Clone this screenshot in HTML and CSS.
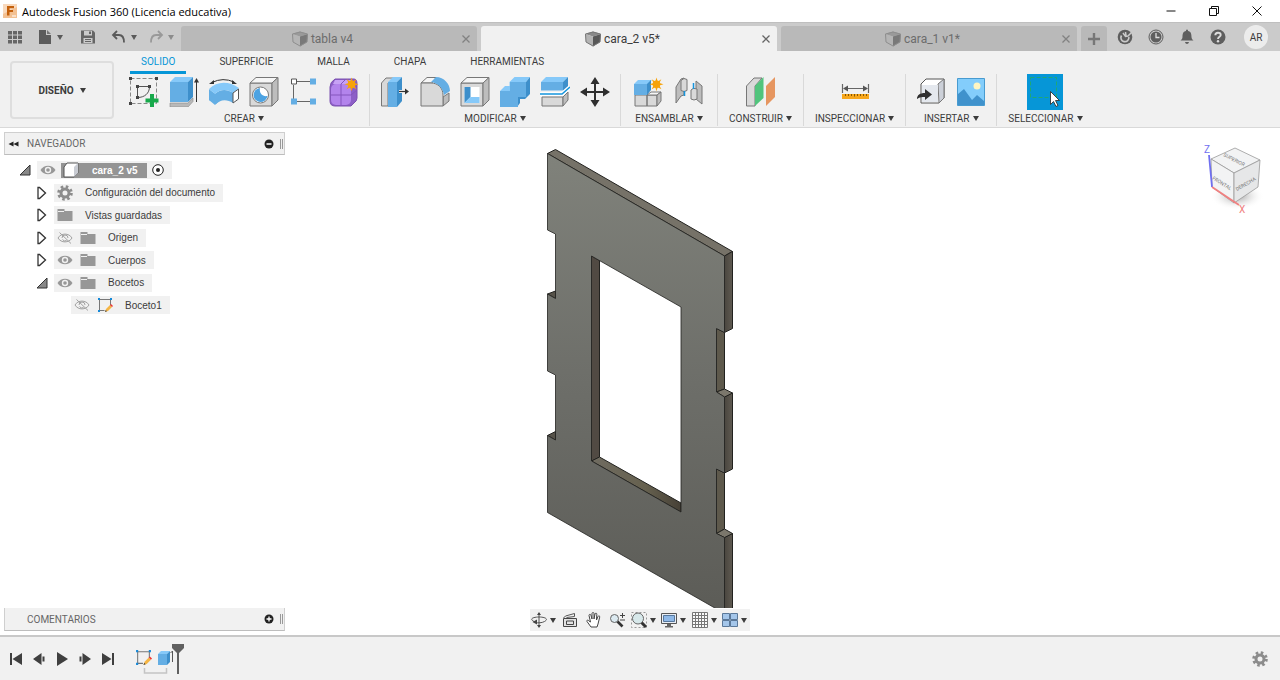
FILE: index.html
```html
<!DOCTYPE html>
<html lang="es">
<head>
  <meta charset="UTF-8">
  <title>Autodesk Fusion 360 (Licencia educativa)</title>
  <link rel="stylesheet" href="styles.css">
</head>
<body>
  <!-- shared icons -->
  <svg class="defs" aria-hidden="true">
    <symbol id="i-cube" viewBox="0 0 16 16">
      <path d="M0 3 8 0.500 16 3 8 5.500z" fill="#8a8a8a"/>
      <path d="M0 3 8 5.500V15.500L1 11z" fill="#b4b4b4"/>
      <path d="M16 3 8 5.500V15.500L15 11z" fill="#585858"/>
      <path d="M0.500 3 8 1 15.500 3 15 11 8 15 1 11z" fill="none" stroke="#777"/>
    </symbol>
    <symbol id="i-close" viewBox="0 0 10 10"><path d="M1.500 1.500l7 7M8.500 1.500l-7 7" stroke="#666" stroke-width="1.300"/></symbol>
    <symbol id="i-eye" viewBox="0 0 16 16">
      <path d="M0.500 8C4 2.200 12 2.200 15.500 8 12 13.800 4 13.800 0.500 8z" fill="#979797"/>
      <circle cx="8" cy="8" r="3.200" fill="#f1f1f1"/><circle cx="8" cy="8" r="1.800" fill="#979797"/>
    </symbol>
    <symbol id="i-eye-off" viewBox="0 0 16 16">
      <path d="M1 8C4 2.800 12 2.800 15 8 12 13.200 4 13.200 1 8zM2.500 2.500l11.500 11M5 8a3 3 0 0 1 6 0M5.500 9.500a3 3 0 0 0 4 1" fill="none" stroke="#a2a2a2"/>
    </symbol>
    <symbol id="i-folder" viewBox="0 0 16 16"><path d="M0.500 2h7v2h8v10h-15z" fill="#979797"/><path d="M1 4.500h6" stroke="#f1f1f1"/></symbol>
    <symbol id="i-gear" viewBox="0 0 16 16">
      <circle cx="8" cy="8" r="6.300" fill="none" stroke="currentColor" stroke-width="3" stroke-dasharray="2.470 2.478"/>
      <circle cx="8" cy="8" r="4" fill="none" stroke="currentColor" stroke-width="3"/>
    </symbol>
    <symbol id="i-closed" viewBox="0 0 12 14"><path d="M2 1.500v11h1.500L9.500 7 3.500 1.500z" fill="#fff" stroke="#333" stroke-width="1.300"/></symbol>
    <symbol id="i-open" viewBox="0 0 12 14"><path d="M11 2v10H1z" fill="#888" stroke="#333"/></symbol>
    <symbol id="i-sketch" viewBox="0 0 16 16">
      <path d="M2.500 2.500h11M2.500 2.500v11M13.500 2.500v6M2.500 13.500h5" fill="none" stroke="#777"/>
      <path d="M1 1h2v2H1zM13 1h2v2h-2zM1 13h2v2H1z" fill="#1689d8"/>
      <path d="M8 15l1-3 4-4 2 2-4 4z" fill="#f5b544"/><path d="M13 8l1-1 2 2-1 1z" fill="#e33"/><path d="M8 15l.7-2 1.300 1.300z" fill="#444"/>
    </symbol>
    <symbol id="i-star" viewBox="0 0 16 16">
      <path d="M8 0.500l1.300 4.300 3.900-2.300-2.200 3.900 4.500 1.300-4.500 1.400 2.300 3.900-4-2.200L8 15.300l-1.300-4.500-3.900 2.200 2.200-3.900-4.500-1.400L5 6.400 2.800 2.500l3.900 2.300z" fill="#f7a30a"/>
      <circle cx="8" cy="7.800" r="4" fill="#f7a30a"/>
    </symbol>
  </svg>

  <header class="titlebar">
    <svg class="logo" viewBox="0 0 14 14"><path d="M0 0h14v14H0z" fill="#f8d9bd"/><path d="M0 10l14-7v11H0z" fill="#f3c193"/><path d="M4 2h7v2.200H6.500V6H10v2H6.500v3.500H4z" fill="#c4600c"/><path d="M9 12h4" stroke="#fff"/></svg>
    <span class="app-name">Autodesk Fusion 360 (Licencia educativa)</span>
    <div class="window-buttons">
      <button aria-label="Minimizar"><svg viewBox="0 0 12 12"><path d="M1.500 6h9" stroke="#111"/></svg></button>
      <button aria-label="Restaurar"><svg viewBox="0 0 12 12"><path d="M1.500 3.500h7v7h-7zM3.500 3.500v-2h7v7h-2" fill="none" stroke="#111"/></svg></button>
      <button aria-label="Cerrar"><svg viewBox="0 0 12 12"><path d="M1.500 1.500l9 9M10.500 1.500l-9 9" stroke="#111"/></svg></button>
    </div>
  </header>

  <div class="tabbar">
    <div class="quick">
      <button aria-label="Panel de datos"><svg class="i16" viewBox="0 0 16 16"><path d="M1 2h4v3.500H1zM6 2h4v3.500H6zM11 2h4v3.500h-4zM1 6.500h4V10H1zM6 6.500h4V10H6zM11 6.500h4V10h-4zM1 11h4v3.500H1zM6 11h4v3.500H6zM11 11h4v3.500h-4z" fill="#666"/></svg></button>
      <button class="file" aria-label="Archivo"><svg class="i16" viewBox="0 0 16 16"><path d="M2 1h7v5h5v9H2z" fill="#5c5c5c"/><path d="M10 1l4 4h-4z" fill="#777"/></svg><i class="caret"></i></button>
      <button class="save" aria-label="Guardar"><svg class="i16" viewBox="0 0 16 16"><path d="M1 1.500h12l2 2v11H1z" fill="#666"/><path d="M4 2h8v4.500H4zM3.500 9h9v5h-9z" fill="#cbcbcb"/><path d="M9 2.500h2V5H9zM5 10h6v1H5zM5 12h6v1H5z" fill="#666"/></svg></button>
      <button class="undo" aria-label="Deshacer"><svg class="i16" viewBox="0 0 16 16"><path d="M6 2L2 6l4 4M2.500 6H8c4 0 5 3 5 7.500" fill="none" stroke="#5a5a5a" stroke-width="1.800"/></svg><i class="caret"></i></button>
      <button class="redo" aria-label="Rehacer"><svg class="i16" viewBox="0 0 16 16"><path d="M10 2l4 4-4 4M13.500 6H8c-4 0-5 3-5 7.500" fill="none" stroke="#999" stroke-width="1.800"/></svg><i class="caret"></i></button>
    </div>
    <div class="doc-tabs">
      <div class="doc-tab"><a href="#"><svg class="i16"><use href="#i-cube"/></svg>tabla v4</a><button aria-label="Cerrar tabla v4"><svg><use href="#i-close"/></svg></button></div>
      <div class="doc-tab active"><a href="#"><svg class="i16"><use href="#i-cube"/></svg>cara_2 v5*</a><button aria-label="Cerrar cara_2"><svg><use href="#i-close"/></svg></button></div>
      <div class="doc-tab"><a href="#"><svg class="i16"><use href="#i-cube"/></svg>cara_1 v1*</a><button aria-label="Cerrar cara_1"><svg><use href="#i-close"/></svg></button></div>
      <button class="new-tab" aria-label="Nuevo"><svg viewBox="0 0 12 12"><path d="M6 0v12M0 6h12" stroke="#777" stroke-width="2.400"/></svg></button>
    </div>
    <div class="account">
      <button aria-label="Extensiones"><svg class="i16" viewBox="0 0 16 16"><circle cx="8" cy="8" r="7.300" fill="#5e5e5e"/><path d="M4.500 6.500a4 4 0 1 0 7.300 1.500" fill="none" stroke="#cbcbcb" stroke-width="1.700"/><path d="M6 4l2.500 3.500L11 7l3.500-3.500M9 6.500L8.500 3" fill="none" stroke="#cbcbcb" stroke-width="1.500"/></svg></button>
      <button aria-label="Estado de trabajos"><svg class="i16" viewBox="0 0 16 16"><circle cx="8" cy="8" r="7" fill="none" stroke="#5e5e5e"/><circle cx="8" cy="8" r="5.500" fill="#5e5e5e"/><path d="M8 4v4.500h3.500" fill="none" stroke="#ddd" stroke-width="1.300"/></svg></button>
      <button aria-label="Notificaciones"><svg class="i16" viewBox="0 0 16 16"><path d="M8 .5c1 0 1 .8 1 1.500 3 .6 3.500 3 3.500 6 0 1.500.8 2.500 2 3.500H1.500c1.200-1 2-2 2-3.500 0-3 .5-5.400 3.500-6 0-.7 0-1.500 1-1.500zM6 13h4c-.5 2.500-3.500 2.500-4 0z" fill="#5e5e5e"/></svg></button>
      <button aria-label="Ayuda"><svg class="i16" viewBox="0 0 16 16"><circle cx="8" cy="8" r="7.500" fill="#5e5e5e"/><path d="M5.300 6.300C5.300 2.700 10.700 3 10.700 6 10.700 7.800 8 7.800 8 10" fill="none" stroke="#ddd" stroke-width="1.900"/><circle cx="8" cy="12.200" r="1.200" fill="#ddd"/></svg></button>
      <button class="avatar">AR</button>
    </div>
  </div>

  <div class="ribbon">
    <button class="workspace">DISEÑO <i class="caret"></i></button>
    <div class="tools">
      <nav class="ribbon-tabs">
        <a href="#" class="active">SOLIDO</a>
        <a href="#">SUPERFICIE</a>
        <a href="#">MALLA</a>
        <a href="#">CHAPA</a>
        <a href="#">HERRAMIENTAS</a>
      </nav>
      <div class="groups">
        <section class="group">
          <div class="icons">
            <button aria-label="Crear boceto"><svg viewBox="0 0 30 30">
              <path d="M1.500 1.500h26v25h-26z" fill="none" stroke="#888" stroke-dasharray="4 2"/>
              <path d="M8.500 9.500h12M8.500 9.500v11M20.500 9.500c0 7-5 11-12 11" fill="none" stroke="#555"/>
              <path d="M0 0h3v3H0zM26 0h3v3h-3zM0 25h3v3H0zM7 8h3v3H7zM19 8h3v3h-3zM7 19h3v3H7z" fill="#444"/>
              <path d="M21 17h4v4.500h4.500v4H25V30h-4v-4.500h-4.500v-4H21z" fill="#17a94b"/></svg></button>
            <button aria-label="Extruir"><svg viewBox="0 0 30 30">
              <path d="M1 26h18l5-5v3.500L19 30H1z" fill="#b9b9b9" stroke="#888" stroke-width=".6"/>
              <path class="b1" d="M1 5h18v20H1z"/><path class="b2" d="M1 5l5-5h18l-5 5z"/><path class="b3" d="M19 5l5-5v20l-5 5z"/>
              <path d="M27.500 25V3" stroke="#333"/><path d="M25 5.500L27.500 1 30 5.500z" fill="#333"/></svg></button>
            <button aria-label="Revolución"><svg viewBox="0 0 30 30">
              <path class="b1" d="M0 13c7 6 17 6 25 1v11c-6-4-13-4-18 2L0 23z"/>
              <path class="b1" d="M0 12l6 5c5-5 12-5 18-1v10c-6-4-13-4-18 2l-6-5z"/>
              <path class="b2" d="M0 12C8 4 20 4 30 11l-6 5c-6-4-13-4-18 1z"/>
              <path d="M24 16l5.500-4v10L24 26z" fill="#fff" stroke="#555"/>
              <path d="M3 5.500Q14 0 25 5" fill="none" stroke="#333"/><path d="M0 7l5-4v4zM28 7l-5-4v4z" fill="#333"/></svg></button>
            <button aria-label="Agujero"><svg viewBox="0 0 30 30">
              <path class="g1" d="M1 6h22v23H1z"/><path class="g0" d="M1 6l6-5.500h22L23 6z"/><path class="g2" d="M23 6l6-5.500V23l-6 6z"/>
              <circle cx="11.500" cy="18" r="8" fill="#fff" stroke="#777"/><path d="M11 11a7 7 0 1 0 7.500 8C13 20 10 16 11 11z" fill="#4da3e2"/></svg></button>
            <button aria-label="Patrón"><svg viewBox="0 0 30 30">
              <path d="M8 4.500h14M4.500 8v14M8 24.500h14" stroke="#666"/><path d="M2.500 2h5v5h-5z" fill="#fff" stroke="#555"/>
              <path class="b1" d="M21 1.500h6v6h-6zM2 21.500h6v6H2zM21 21.500h6v6h-6z"/></svg></button>
            <button aria-label="Crear forma"><svg viewBox="0 0 30 30">
              <path d="M6 2h19q3 0 3 5v14q0 3-3 5l-3 3H6q-5 0-5-5V10q0-5 5-8z" fill="#8d5fc7" stroke="#7b50b0"/>
              <path d="M6 3h17l-3 4H4z" fill="#c7a2f5"/><rect x="2" y="7" width="20" height="21" rx="5" fill="#b384ec"/>
              <path d="M2 18h20l6-5M12 7v21M12 7l5-5" fill="none" stroke="#8455bd"/><use href="#i-star" x="15" y="0" width="15" height="15"/></svg></button>
          </div>
          <button class="label">CREAR <i class="caret"></i></button>
        </section>

        <section class="group">
          <div class="icons">
            <button aria-label="Pulsar/tirar"><svg viewBox="0 0 30 30">
              <path class="g1" d="M1.500 6L6 1h8L8 6v23H1.500z"/><path class="b1" d="M8 5h9v25H8z"/><path class="b2" d="M8 5l5-5h9l-5 5z"/><path class="b3" d="M17 5l5-5v24l-5 6z"/>
              <path d="M19 14.500h7" stroke="#fff" stroke-width="3"/><path d="M19 14.500h7" stroke="#333" stroke-width="1.300"/><path d="M25 11.500l4 3-4 3z" fill="#333"/></svg></button>
            <button aria-label="Empalme"><svg viewBox="0 0 30 30">
              <path class="g0" d="M1 6l6-5.500h9L12 6z"/><path class="g2" d="M23 20l6-4v8l-6 5z"/>
              <path class="g1" d="M1 6h10c7 0 12 5 12 12v11H1z"/>
              <path class="b1" d="M11 5l5-5c8 0 14 7 14 14l-6 4C23 11 18 6 11 5z"/></svg></button>
            <button aria-label="Vaciado"><svg viewBox="0 0 30 30">
              <path class="g1" d="M1 6h22v23H1z"/><path class="g0" d="M1 6l6-5.500h22L23 6z"/><path class="g2" d="M23 6l6-5.500V23l-6 6z"/>
              <path d="M4.500 10h15v16h-15z" fill="#fff"/><path class="b3" d="M4.500 10h6v10l-6 6z"/><path class="b2" d="M4.500 26l6-6h9v6z"/></svg></button>
            <button aria-label="Combinar"><svg viewBox="0 0 30 30">
              <path class="b2" d="M0 14l5-5h4.500V5l5-5H30l-4 5H10v9z"/><path class="b3" d="M26 5l4-5v17l-5 5h-5v4l-3 4V20h9z"/>
              <path class="b1" d="M0 14h10V5h16v15h-8v10H0z"/></svg></button>
            <button aria-label="Dividir cuerpo"><svg viewBox="0 0 30 30">
              <path class="b2" d="M1 5l5-5h22l-5 5z"/><path class="b1" d="M1 5h22v8.500H1z"/><path class="b3" d="M23 5l5-5v10l-5 4z"/>
              <path class="g1" d="M2 20h21v9H2z"/><path class="g2" d="M23 20l5-5v8l-5 6z"/>
              <path d="M0 17h22l8-7" fill="none" stroke="#fff" stroke-width="4"/><path d="M0 17h22l8-7" fill="none" stroke="#1595dd" stroke-width="1.500"/></svg></button>
            <button aria-label="Mover/copiar"><svg viewBox="0 0 30 30">
              <path d="M15 5v20M5 15h20" stroke="#2f2f2f" stroke-width="2"/><path d="M15 0l4.500 7h-9zM15 30l4.500-7h-9zM0 15l7-4.500v9zM30 15l-7-4.500v9z" fill="#2f2f2f"/></svg></button>
          </div>
          <button class="label">MODIFICAR <i class="caret"></i></button>
        </section>

        <section class="group wide">
          <div class="icons">
            <button aria-label="Nuevo componente"><svg viewBox="0 0 30 30">
              <path class="g1" d="M1 18h12v11H1zM13 18h10v11H13z"/><path class="g0" d="M13 18l4-3h10l-4 3z"/><path class="g2" d="M23 18l4-3v9l-4 5z"/>
              <path class="b2" d="M0 7l4-4h14l-4 4z"/><path class="b1" d="M0 7h13v11H0z"/><path class="b3" d="M13 7l4-4v10l-4 5z"/>
              <use href="#i-star" x="15" y="0" width="15" height="15"/></svg></button>
            <button aria-label="Unión"><svg viewBox="0 0 30 30">
              <path class="g2" d="M2 10l5-8 3-1v17l-3 1-5 7z"/><path class="g1" d="M7 3.500q3-3.500 6-1v11q-3 2-6 0z"/>
              <path class="g2" d="M28 27l-6-5V4l6 5z"/><path class="g1" d="M17 13q2-3 6-1v10q-3 2-6 0z"/>
              <path d="M10.500 14v5M19.500 6v6" stroke="#1595dd" stroke-width="1.500"/></svg></button>
          </div>
          <button class="label">ENSAMBLAR <i class="caret"></i></button>
        </section>

        <section class="group">
          <div class="icons">
            <button aria-label="Plano de desfase"><svg viewBox="0 0 30 30">
              <path class="g1" d="M1.500 9L9 1h8l-7 8v20H1.500z"/><path d="M10 9l8.500-9v21L10 29z" fill="#51c47c"/><path d="M21 9l9-9v20l-9 9z" fill="#e69660"/></svg></button>
          </div>
          <button class="label">CONSTRUIR <i class="caret"></i></button>
        </section>

        <section class="group">
          <div class="icons">
            <button aria-label="Medir"><svg viewBox="0 0 30 30">
              <path d="M2.500 7v9M28.500 7v9M5 11.500h20" stroke="#666" stroke-width="1.200"/><path d="M3 11.500l5-3v6zM28 11.500l-5-3v6z" fill="#555"/>
              <path d="M2 17h27v5H2z" fill="#f7a71c"/><path d="M5.500 17v2M8.500 17v2M11.500 17v2M14.500 17v2.500M17.500 17v2M20.500 17v2M23.500 17v2M26.500 17v2" stroke="#875600"/></svg></button>
          </div>
          <button class="label">INSPECCIONAR <i class="caret"></i></button>
        </section>

        <section class="group">
          <div class="icons">
            <button aria-label="Insertar derivar"><svg viewBox="0 0 30 30">
              <path d="M5 7l5-5h18v19l-5 5H5z" fill="#fff" stroke="#555"/><path d="M22 7l6-5v19l-5 5z" fill="#ccd0d8" stroke="#777"/><path d="M6 8h16v17H6z" fill="#e4e8ee"/>
              <path d="M1 22c0-4 3-6 8-6v-4l7 5.500L9 23v-3c-3 0-5 0-8 2z" fill="#2f2f2f"/></svg></button>
            <button aria-label="Lienzo"><svg viewBox="0 0 30 30">
              <path d="M1.500 1.500h27v27h-27z" fill="#83cdfb" stroke="#489bd0"/><path d="M2 17l6-5 8 11 5-5 7 6v4H2z" fill="#4092cc"/><circle cx="21" cy="9" r="3.500" fill="#fff6c2"/></svg></button>
          </div>
          <button class="label">INSERTAR <i class="caret"></i></button>
        </section>

        <section class="group">
          <div class="icons">
            <button class="select" aria-label="Seleccionar"><svg viewBox="0 0 36 36">
              <path d="M3.500 3.500h26v20h-26z" fill="none" stroke="#20a874" stroke-dasharray="4 2"/>
              <path d="M23.500 17.500v13l3-3 2.500 5 2-1-2.500-5h4z" fill="#fff" stroke="#333" stroke-width=".9"/></svg></button>
          </div>
          <button class="label">SELECCIONAR <i class="caret"></i></button>
        </section>
      </div>
    </div>
  </div>

  <main class="viewport">
    <aside class="browser">
      <div class="panel-head">
        <svg class="i12" viewBox="0 0 12 12"><path d="M5.500 3.500v5L0.500 6zM10.500 3.500v5L5.500 6z" fill="#222"/></svg>
        <span>NAVEGADOR</span>
        <button aria-label="Contraer"><svg class="i12" viewBox="0 0 12 12"><circle cx="6" cy="6" r="4.500" fill="#222"/><path d="M3.500 6h5" stroke="#fff" stroke-width="1.500"/></svg></button>
        <i class="grip"></i>
      </div>
      <ul class="tree">
        <li>
          <button class="expander" aria-label="Contraer"><svg><use href="#i-open"/></svg></button>
          <div class="chip root">
            <svg class="i16"><use href="#i-eye"/></svg>
            <span class="selected"><svg class="i16" viewBox="0 0 16 16"><path d="M1 5l3-4h11v10l-4 4H1z" fill="#fff" stroke="#555"/><path d="M11 5l4-4v10l-4 4z" fill="#c9ccd3"/></svg>cara_2 v5</span>
            <svg class="i12" viewBox="0 0 12 12"><circle cx="6" cy="6" r="5.300" fill="#fff" stroke="#222"/><circle cx="6" cy="6" r="2" fill="#222"/></svg>
          </div>
        </li>
        <li class="level1">
          <button class="expander" aria-label="Expandir"><svg><use href="#i-closed"/></svg></button>
          <div class="chip"><svg class="i16 gear"><use href="#i-gear"/></svg><span>Configuración del documento</span></div>
        </li>
        <li class="level1">
          <button class="expander" aria-label="Expandir"><svg><use href="#i-closed"/></svg></button>
          <div class="chip"><svg class="i16"><use href="#i-folder"/></svg><span>Vistas guardadas</span></div>
        </li>
        <li class="level1">
          <button class="expander" aria-label="Expandir"><svg><use href="#i-closed"/></svg></button>
          <div class="chip"><svg class="i16"><use href="#i-eye-off"/></svg><svg class="i16"><use href="#i-folder"/></svg><span>Origen</span></div>
        </li>
        <li class="level1">
          <button class="expander" aria-label="Expandir"><svg><use href="#i-closed"/></svg></button>
          <div class="chip"><svg class="i16"><use href="#i-eye"/></svg><svg class="i16"><use href="#i-folder"/></svg><span>Cuerpos</span></div>
        </li>
        <li class="level1">
          <button class="expander" aria-label="Contraer"><svg><use href="#i-open"/></svg></button>
          <div class="chip"><svg class="i16"><use href="#i-eye"/></svg><svg class="i16"><use href="#i-folder"/></svg><span>Bocetos</span></div>
        </li>
        <li class="level2">
          <div class="chip"><svg class="i16"><use href="#i-eye-off"/></svg><svg class="i16"><use href="#i-sketch"/></svg><span>Boceto1</span></div>
        </li>
      </ul>
    </aside>

    <svg class="model" viewBox="0 0 186 480" preserveAspectRatio="xMidYMin slice">
      <defs>
        <linearGradient id="front" x1="0" y1="0" x2="0" y2="1"><stop offset="0" stop-color="#80827b"/><stop offset=".5" stop-color="#6d6e69"/><stop offset="1" stop-color="#5c5c57"/></linearGradient>
        <linearGradient id="side" x1="0" y1="0" x2="1" y2="0"><stop offset="0" stop-color="#4a463f"/><stop offset="1" stop-color="#5f5a51"/></linearGradient>
        <linearGradient id="sill" x1="0" y1="0" x2="1" y2="0"><stop offset="0" stop-color="#706c61"/><stop offset=".6" stop-color="#66614f"/><stop offset="1" stop-color="#464036"/></linearGradient>
      </defs>
      <g stroke="#22221f" stroke-width="1">
        <!-- thickness faces -->
        <path d="M.5 25.500l8-4 177 102-8 4.500z" fill="#767268"/>
        <path d="M177.500 128l8-4.500v77l-8 4zM177.500 269l8-4v76l-8 4zM177.500 409.500l8-4V490h-8z" fill="url(#side)"/>
        <path d="M169.500 200.500l8 4V261l-8 3zM169.500 341l8 4v56l-8 4.500z" fill="#5e594c"/>
        <path d="M169.500 264l8-3 8 4-8 4zM169.500 405.500l8-4.500 8 4.500-8 4z" fill="#7b776c"/>
        <path d="M.5 166l8-3v7.500zM.5 307.500l8-4v8.500z" fill="#57534a"/>
        <path d="M44.500 128l8 4.500V329l-8 4z" fill="#514a43"/>
        <path d="M44.500 333l8-4 81.500 46v9z" fill="url(#sill)"/>
        <!-- front face -->
        <path d="M.5 25.500L177.500 128v76.500l-8-4V264l8 5v76l-8-4v64.500l8 4v76L.5 384.500v-77l8 4.500v-65l-8-4V166l8 4.500V106l-8-4zM44.500 128v205L134 384V179z" fill="url(#front)" fill-rule="evenodd" stroke-width=".8"/>
      </g>
    </svg>

    <svg class="viewcube" viewBox="0 0 64 80">
      <defs><radialGradient id="shade"><stop offset="0" stop-color="#999"/><stop offset="1" stop-color="#fff" stop-opacity="0"/></radialGradient></defs>
      <ellipse cx="37" cy="56" rx="27" ry="14" fill="url(#shade)"/>
      <g fill="#f2f3f4" stroke="#999" stroke-width=".8">
        <path d="M11 19L35 8l25 12-26 13z"/><path d="M11 19l23 14v30L12 47z"/><path d="M34 33l26-13-2 27-24 16z" fill="#e6e7e8"/>
      </g>
      <path d="M9 15l3 32" stroke="#6f6ff0" stroke-width="1.800"/><path d="M12 47l27 18" stroke="#f08080" stroke-width="1.800"/>
      <g class="face">
        <text transform="translate(23 16) rotate(27)">SUPERIOR</text>
        <text transform="translate(12 39) rotate(32)">FRONTAL</text>
        <text transform="translate(37 51) rotate(-30)">DERECHA</text>
      </g>
      <text class="axis-z" x="4" y="13">Z</text><text class="axis-x" x="39" y="73">X</text>
    </svg>

    <div class="comments panel-head">
      <i class="i12"></i>
      <span>COMENTARIOS</span>
      <button aria-label="Añadir comentario"><svg class="i12" viewBox="0 0 12 12"><circle cx="6" cy="6" r="4.500" fill="#222"/><path d="M3.500 6h5M6 3.500v5" stroke="#fff" stroke-width="1.300"/></svg></button>
      <i class="grip"></i>
    </div>

    <div class="navbar">
      <button aria-label="Órbita"><svg class="i16" viewBox="0 0 16 16"><path d="M8 1v14M3 9.500C-2 7 2 5 8 5s10 2 5.500 4.500C11 11 7 11 4 10.500" fill="none" stroke="#555"/><path d="M6 3l2-3 2 3zM6 13l2 3 2-3zM6 7.500v5L1.500 10z" fill="#444"/></svg><i class="caret"></i></button>
      <button class="single" aria-label="Mirar a"><svg class="i16" viewBox="0 0 16 16"><path d="M1.500 6.500h13v8h-13zM4.500 9h7v3.500h-7z" fill="#e2e2e2" stroke="#444"/><path d="M1.500 6l2-2 9-2.500v3l-8 1" fill="none" stroke="#555"/></svg></button>
      <button class="single" aria-label="Encuadre"><svg class="i16" viewBox="0 0 16 16"><path d="M5 15L1 9.500C.5 8 2 7.500 3 9l1.500 1L3 3.500c0-1.500 1.700-1.500 2 0L6 7V1.500c0-1.300 2-1.300 2 0V7l1-5c.3-1.300 2-1 1.800.3L10.500 8l1.500-3.500c.5-1.200 2-.7 1.700.6L12 12l-1 3z" fill="#fff" stroke="#444"/></svg></button>
      <button class="single" aria-label="Zoom"><svg class="i16" viewBox="0 0 16 16"><path d="M8 9l5.500 5.500" stroke="#333" stroke-width="2.600"/><circle cx="5.500" cy="6.500" r="4" fill="#dceaf1" stroke="#666"/><path d="M11 3.500h5M13.500 1v5M11 8h5" stroke="#444"/></svg></button>
      <button aria-label="Ajustar"><svg class="i16" viewBox="0 0 16 16"><path d="M.5 .5h15v15H.5z" fill="none" stroke="#999" stroke-dasharray="2 2"/><path d="M10 10l5 5" stroke="#333" stroke-width="3"/><circle cx="7" cy="6.500" r="5.500" fill="#d7e8ea" stroke="#666"/></svg><i class="caret"></i></button>
      <button aria-label="Visualización"><svg class="i16" viewBox="0 0 16 16"><path d="M.5 1.500h15v10H.5z" fill="#e8eef5" stroke="#555"/><path d="M2.500 3.500h11v6h-11z" fill="#8fb9e8" stroke="#56779d"/><path d="M6 12h4v2h2v1.500H4V14h2z" fill="#666"/></svg><i class="caret"></i></button>
      <button aria-label="Rejilla"><svg class="i16" viewBox="0 0 16 16"><path d="M.5 .5h15v15H.5zM3.500 .5v15M6.500 .5v15M9.500 .5v15M12.500 .5v15M.5 3.500h15M.5 6.500h15M.5 9.500h15M.5 12.500h15" fill="#fafafa" stroke="#777"/></svg><i class="caret"></i></button>
      <button aria-label="Ventanas gráficas"><svg class="i16" viewBox="0 0 16 16"><path d="M.5 1.500h7v6h-7zM8.500 1.500h7v6h-7zM.5 8.500h7v6h-7zM8.500 8.500h7v6h-7z" fill="#a4c6ea" stroke="#5b7899"/></svg><i class="caret"></i></button>
    </div>
  </main>

  <footer class="timeline">
    <div class="playback">
      <button aria-label="Inicio"><svg class="i14" viewBox="0 0 14 14"><path d="M1 1h2v12H1zM13 1v12L3.500 7z" fill="#3f3f3f"/></svg></button>
      <button aria-label="Atrás"><svg class="i14" viewBox="0 0 14 14"><path d="M9.500 1v12L1 7zM10.500 4.500h2v5h-2z" fill="#3f3f3f"/></svg></button>
      <button aria-label="Reproducir"><svg class="i14" viewBox="0 0 14 14"><path d="M2 0v14l11-7z" fill="#3f3f3f"/></svg></button>
      <button aria-label="Adelante"><svg class="i14" viewBox="0 0 14 14"><path d="M4.500 1v12L13 7zM1.500 4.500h2v5h-2z" fill="#3f3f3f"/></svg></button>
      <button aria-label="Final"><svg class="i14" viewBox="0 0 14 14"><path d="M11 1h2v12h-2zM1 1v12l9.500-6z" fill="#3f3f3f"/></svg></button>
    </div>
    <svg class="history" viewBox="0 0 50 32">
      <use href="#i-sketch" x="0" y="6" width="17" height="17"/>
      <path class="b1" d="M23 11h9v11h-9z"/><path class="b2" d="M23 11l3-3h9l-3 3z"/><path class="b3" d="M32 11l3-3v11l-3 3z"/><path d="M37.500 19V8l-2 2" fill="none" stroke="#555"/>
      <path d="M9.500 25v5h22v-5" fill="none" stroke="#c4c4c4" stroke-width="1.500"/>
      <path d="M37 1h12v4l-5 5v21h-2V10l-5-5z" fill="#606060"/>
    </svg>
    <button class="settings" aria-label="Configuración"><svg class="i16 gear"><use href="#i-gear"/></svg></button>
  </footer>
</body>
</html>
```

FILE: styles.css
```css
:root {
  --bar: #cbcbcb;
  --tab: #b9b9b9;
  --panel: #f1f1f1;
  --line: #d9d9d9;
  --accent: #0696d7;
  --text: #3c3c3c;
}
* {
  box-sizing: border-box;
}
body {
  margin: 0;
  height: 100vh;
  display: flex;
  flex-direction: column;
  font-family: Roboto, "Liberation Sans", sans-serif;
  font-size: 10px;
  color: var(--text);
  background: #fff;
  overflow: hidden;
}
button {
  display: flex;
  align-items: center;
  justify-content: center;
  padding: 0;
  border: none;
  background: none;
  font: inherit;
  color: inherit;
  cursor: pointer;
}
a {
  color: inherit;
  text-decoration: none;
}
svg {
  display: block;
  flex: none;
}
.defs {
  display: none;
}
.i16 {
  width: 16px;
  height: 16px;
}
.i14 {
  width: 14px;
  height: 14px;
}
.i12 {
  width: 12px;
  height: 12px;
}
.caret {
  border: 3px solid transparent;
  border-top: 5px solid currentColor;
  border-bottom: 0;
}

/* title bar */
.titlebar {
  height: 22px;
  display: flex;
  align-items: center;
  padding: 0 14px 0 3px;
  gap: 5px;
}
.logo {
  width: 14px;
  height: 14px;
}
.app-name {
  font-family: "Open Sans", sans-serif;
  font-size: 11px;
  color: #000;
}
.window-buttons {
  display: flex;
  gap: 31px;
  margin-left: auto;
  padding-right: 3px;
}
.window-buttons svg {
  width: 12px;
  height: 12px;
}

/* document tabs */
.tabbar {
  height: 29px;
  display: flex;
  background: var(--bar);
  border-top: 1px solid #bfbfbf;
}
.quick {
  width: 181px;
  display: flex;
  align-items: center;
  padding-left: 7px;
  color: #5a5a5a;
}
.quick button {
  gap: 4px;
}
.quick .file {
  margin-left: 14px;
}
.quick .save {
  margin-left: 17px;
}
.quick .undo {
  margin-left: 15px;
}
.quick .redo {
  margin-left: 11px;
  color: #8c8c8c;
}
.doc-tabs {
  flex: 1;
  display: flex;
  gap: 4px;
  padding-top: 3px;
  font-size: 12px;
}
.doc-tab {
  flex: 1;
  display: flex;
  align-items: center;
  padding: 0 4px 0 6px;
  background: var(--tab);
  border-radius: 3px 3px 0 0;
  color: #6c6c6c;
}
.doc-tab a {
  flex: 1;
  display: flex;
  align-items: center;
  justify-content: center;
  gap: 3px;
}
.doc-tab:not(.active) svg {
  opacity: 0.65;
}
.doc-tab button {
  width: 15px;
}
.doc-tab button svg {
  width: 10px;
  height: 10px;
}
.doc-tab.active {
  background: var(--panel);
  color: var(--text);
}
.new-tab {
  width: 26px;
  background: var(--tab);
  border-radius: 3px 3px 0 0;
}
.new-tab svg {
  width: 12px;
  height: 12px;
}
.account {
  width: 173px;
  display: flex;
  align-items: center;
  gap: 15px;
  padding-left: 10px;
}
.avatar {
  width: 24px;
  height: 24px;
  margin-left: 3px;
  border-radius: 50%;
  background: #ececec;
}

/* ribbon */
.ribbon {
  height: 77px;
  display: flex;
  padding-left: 10px;
  background: var(--panel);
  border-bottom: 1px solid var(--line);
}
.workspace {
  width: 104px;
  height: 58px;
  margin: 10px 5px 0 0;
  gap: 6px;
  border: 2px solid #dedede;
  border-radius: 4px;
  font-weight: 700;
}
.tools {
  flex: 1;
}
.ribbon-tabs {
  display: flex;
  gap: 22px;
  padding-left: 11px;
}
.ribbon-tabs a {
  height: 23px;
  padding: 0 11px;
  line-height: 22px;
  border-bottom: 3px solid transparent;
}
.ribbon-tabs .active {
  color: var(--accent);
  border-bottom-color: var(--accent);
}
.groups {
  display: flex;
}
.group {
  display: flex;
  flex-direction: column;
  align-items: center;
  padding: 0 10px;
}
.group.wide {
  padding: 0 13px;
}
.group:not(:last-child) {
  border-right: 1px solid var(--line);
}
.icons {
  display: flex;
  align-items: center;
  gap: 10px;
  height: 36px;
}
.icons svg {
  width: 30px;
  height: 30px;
}
.icons .select svg {
  width: 36px;
  height: 36px;
  background: var(--accent);
}
.label {
  height: 16px;
  gap: 3px;
  padding: 0 1px;
}
.b1 {
  fill: #64aee4;
}
.b2 {
  fill: #86c9f9;
}
.b3 {
  fill: #3d8fcb;
}
.g0, .g1, .g2 {
  stroke: #777;
  stroke-width: 1;
}
.g0 {
  fill: #f6f6f6;
}
.g1 {
  fill: #d9d9d9;
}
.g2 {
  fill: #bdbdbd;
}

/* viewport */
.viewport {
  flex: 1;
  min-height: 0;
  display: grid;
  grid-template-columns: 1fr auto 1fr;
  grid-template-rows: minmax(0, 1fr) auto;
  padding-bottom: 4px;
}
.browser {
  padding: 4px 0 0 4px;
}
.panel-head {
  width: 281px;
  height: 23px;
  display: flex;
  align-items: center;
  padding: 0 1px 0 3px;
  background: var(--panel);
  border: 1px solid #cfcfcf;
  border-bottom-color: #bdbdbd;
  color: #666;
}
.panel-head span {
  flex: 1;
  padding-left: 7px;
}
.grip {
  width: 3px;
  height: 10px;
  margin-left: 5px;
  border: 1px solid #999;
  border-width: 0 1px;
}
.tree {
  height: 153px;
  margin: 6px 0 0;
  padding: 0 0 0 15px;
  list-style: none;
  display: flex;
  flex-direction: column;
  justify-content: space-between;
  font-family: "Liberation Sans", Arial, sans-serif;
}
.tree li {
  height: 18px;
  display: flex;
  align-items: center;
  gap: 6px;
}
.tree .level1 {
  padding-left: 17px;
}
.tree .level2 {
  padding-left: 52px;
}
.expander svg {
  width: 12px;
  height: 14px;
}
.chip {
  height: 18px;
  display: flex;
  align-items: center;
  gap: 7px;
  padding: 0 8px 0 3px;
  background: var(--panel);
}
.chip > span {
  padding-left: 5px;
}
.chip.root {
  gap: 5px;
}
.chip .selected {
  height: 15px;
  display: flex;
  align-items: center;
  gap: 13px;
  padding: 0 9px 0 2px;
  background: #949494;
  color: #fff;
  font-weight: 700;
}
.gear {
  color: #8c8c8c;
}
.model {
  width: 186px;
  height: 100%;
}
.viewcube {
  width: 64px;
  height: 80px;
  margin: 12px 16px 0 0;
  justify-self: end;
}
.face {
  font-size: 5px;
  fill: #777;
}
.axis-z, .axis-x {
  font-size: 10px;
  fill: #6f6ff0;
}
.axis-x {
  fill: #f08080;
}
.comments {
  margin-left: 4px;
  border-top: 0;
}
.navbar {
  width: 220px;
  height: 22px;
  display: flex;
  align-items: center;
  justify-content: space-between;
  justify-self: center;
  padding: 0 3px 0 1px;
  margin: 1px -17px 0;
  background: var(--panel);
}
.navbar button {
  gap: 3px;
}
.navbar .single {
  padding: 0 1px;
}

/* timeline */
.timeline {
  height: 45px;
  display: flex;
  align-items: center;
  padding: 0 12px 0 9px;
  background: var(--panel);
  border-top: 2px solid #c8c8c8;
}
.playback {
  display: flex;
  gap: 9px;
}
.history {
  width: 50px;
  height: 32px;
  margin-left: 20px;
}
.settings {
  margin-left: auto;
}
```
